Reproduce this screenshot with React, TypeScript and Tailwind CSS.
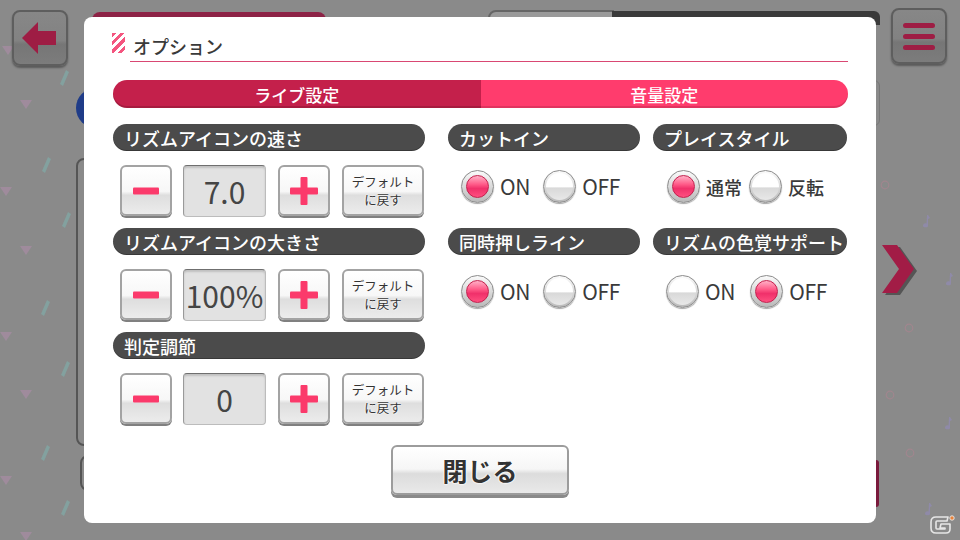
import React from "react";

const deco: { x: number; y: number; t: "tri" | "teal" | "ring" | "note" }[] = [
  { x: 2, y: 46, t: "tri" },
  { x: 20, y: 100, t: "tri" },
  { x: 60, y: 70, t: "teal" },
  { x: 42, y: 157, t: "teal" },
  { x: 0, y: 187, t: "tri" },
  { x: 62, y: 212, t: "teal" },
  { x: 20, y: 246, t: "tri" },
  { x: 41, y: 300, t: "teal" },
  { x: 0, y: 332, t: "tri" },
  { x: 61, y: 361, t: "teal" },
  { x: 20, y: 390, t: "tri" },
  { x: 41, y: 445, t: "teal" },
  { x: 0, y: 476, t: "tri" },
  { x: 61, y: 500, t: "teal" },
  { x: 20, y: 532, t: "tri" },
  { x: 885, y: 390, t: "ring" },
  { x: 905, y: 448, t: "ring" },
  { x: 904, y: 323, t: "ring" },
  { x: 942, y: 417, t: "note" },
  { x: 922, y: 503, t: "note" },
  { x: 920, y: 215, t: "note" },
  { x: 943, y: 273, t: "note" },
  { x: 880, y: 180, t: "ring" },
];

function Deco({ t }: { t: string }) {
  if (t === "tri")
    return (
      <svg width="12" height="9" viewBox="0 0 12 9">
        <path d="M0 0 L12 0 L6 9 Z" fill="#9f8b9c" />
      </svg>
    );
  if (t === "teal")
    return (
      <svg width="9" height="16" viewBox="0 0 9 16">
        <path d="M6 0 L9 2 L3 16 L0 14 Z" fill="#83a19f" />
      </svg>
    );
  if (t === "ring")
    return (
      <svg width="10" height="10" viewBox="0 0 10 10">
        <circle cx="5" cy="5" r="3.8" fill="none" stroke="#a0868e" strokeWidth="1.2" />
      </svg>
    );
  return (
    <svg width="10" height="14" viewBox="0 0 10 14">
      <path d="M7 0 L8 0 L8 10 A2.5 2 0 1 1 6.5 8.5 L7 0 Z M8 0 L10 3 L8 4 Z" fill="#8f8aa8" />
    </svg>
  );
}

function Radio({ on }: { on: boolean }) {
  return (
    <div className="w-[33px] h-[33px] shrink-0 rounded-full border border-[#8c8c8c] bg-[linear-gradient(#fbfbfb,#b9b9b9)] flex items-center justify-center shadow-[0_1px_1px_rgba(0,0,0,0.35)]">
      {on ? (
        <div className="w-[23px] h-[23px] rounded-full border border-[#c3204d] bg-[linear-gradient(#ffb0c6_0%,#ff5a88_40%,#f0306a_60%,#ff4f80_100%)]" />
      ) : (
        <div className="w-[27px] h-[27px] rounded-full bg-[linear-gradient(#ffffff_0%,#ffffff_50%,#d9d9d9_56%,#e8e8e8_100%)]" />
      )}
    </div>
  );
}

function Label({ text }: { text: string }) {
  const latin = /^[A-Z]+$/.test(text);
  return (
    <span
      className={
        latin
          ? "ml-[6px] text-[21px] tracking-[-0.3px] font-normal"
          : "ml-[6px] text-[18px] font-medium"
      }
    >
      {text}
    </span>
  );
}

function RadioRow({
  a,
  b,
  sel,
  offsets,
}: {
  a: string;
  b: string;
  sel: 0 | 1;
  offsets: [number, number];
}) {
  return (
    <div className="flex items-center h-[33px] text-[#3a3a3a] leading-none">
      <div style={{ width: offsets[0] }} className="shrink-0" />
      <Radio on={sel === 0} />
      <Label text={a} />
      <div style={{ width: offsets[1] }} className="shrink-0" />
      <Radio on={sel === 1} />
      <Label text={b} />
    </div>
  );
}

const btn =
  "rounded-[6px] border-2 border-[#a3a3a3] bg-[linear-gradient(#ffffff_0%,#f7f7f7_52%,#dedede_60%,#ececec_100%)] shadow-[0_2px_0_#808080] flex items-center justify-center";

function Stepper({ value }: { value: string }) {
  return (
    <div className="flex h-[52px] mt-[14px]">
      <div className={`${btn} ml-[7px] w-[52px] h-[51px]`}>
        <svg width="26" height="8" viewBox="0 0 26 8">
          <rect x="0" y="0.5" width="26" height="7" rx="1" fill="#fb3a6b" />
        </svg>
      </div>
      <div className="ml-[11px] w-[83px] h-[52px] rounded-[4px] bg-[#e2e2e2] border border-[#bcbcbc] border-t-[#6f6f6f] border-l-[#9a9a9a] shadow-[inset_0_2px_2px_rgba(0,0,0,0.15)] flex items-center justify-center text-[30px] font-normal text-[#454545] leading-none">
        {value}
      </div>
      <div className={`${btn} ml-[12px] w-[52px] h-[51px]`}>
        <svg width="28" height="28" viewBox="0 0 28 28">
          <rect x="10.5" y="0" width="7" height="28" rx="1" fill="#fb3a6b" />
          <rect x="0" y="10.5" width="28" height="7" rx="1" fill="#fb3a6b" />
        </svg>
      </div>
      <div
        className={`${btn} ml-[12px] w-[82px] h-[51px] flex-col text-[12.5px] leading-[18px] text-[#333] [text-shadow:0_0_2px_#fff,0_0_2px_#fff]`}
      >
        <span className="block h-[15px] leading-[15px]">デフォルト</span>
        <span className="block h-[15px] leading-[15px] mt-[3px]">に戻す</span>
      </div>
    </div>
  );
}

function Pill({ children, w }: { children: React.ReactNode; w: string }) {
  return (
    <div
      className={`${w} h-[27px] rounded-full bg-[#4b4b4b] text-white text-[18px] font-medium leading-none flex items-center pl-[11px] shadow-[inset_0_-1px_0_rgba(0,0,0,0.25)]`}
    >
      {children}
    </div>
  );
}

export default function App() {
  return (
    <div className="relative w-[960px] h-[540px] overflow-hidden bg-[#8a8a8a] font-['Noto_Sans_CJK_JP','Noto_Sans',sans-serif]">
      {deco.map((d, i) => (
        <div key={i} className="absolute" style={{ left: d.x, top: d.y }}>
          <Deco t={d.t} />
        </div>
      ))}

      {/* back button */}
      <div className="absolute left-[12px] top-[10px] w-[56px] h-[56px] rounded-[8px] border-2 border-[#5e5e5e] bg-[linear-gradient(#878787_0%,#828282_55%,#767676_62%,#7c7c7c_100%)] shadow-[0_2px_2px_rgba(0,0,0,0.35)] flex items-center justify-center">
        <svg width="36" height="32" viewBox="0 0 36 32">
          <path d="M0 16 L16 0 L16 9 L34 9 L34 23 L16 23 L16 32 Z" fill="#9e1d44" />
        </svg>
      </div>

      {/* menu button */}
      <div className="absolute left-[891px] top-[8px] w-[56px] h-[56px] rounded-[8px] border-2 border-[#5e5e5e] bg-[linear-gradient(#878787_0%,#828282_55%,#767676_62%,#7c7c7c_100%)] shadow-[0_2px_2px_rgba(0,0,0,0.35)] flex flex-col items-center justify-center gap-[6px]">
        <div className="w-[32px] h-[5px] rounded-full bg-[#9e1d44]" />
        <div className="w-[32px] h-[5px] rounded-full bg-[#9e1d44]" />
        <div className="w-[32px] h-[5px] rounded-full bg-[#9e1d44]" />
      </div>

      {/* background panels behind modal */}
      <div className="absolute left-[92px] top-[12px] w-[234px] h-[14px] rounded-t-[8px] bg-[#8d2346]" />
      <div className="absolute left-[488px] top-[10px] w-[126px] h-[14px] rounded-tl-[8px] border-2 border-[#666] bg-[#9a9a9a]" />
      <div className="absolute left-[612px] top-[11px] w-[268px] h-[14px] rounded-tr-[6px] bg-[#3a3a3a]" />
      <div className="absolute left-[860px] top-[80px] w-[20px] h-[46px] rounded-r-[6px] border border-[#777]" />
      <div className="absolute left-[76px] top-[88px] w-[40px] h-[40px] rounded-full bg-[#1f3c88]" />
      <div className="absolute left-[76px] top-[158px] w-[30px] h-[288px] rounded-l-[8px] border-2 border-[#555]" />
      <div className="absolute left-[80px] top-[455px] w-[30px] h-[36px] rounded-l-[8px] border-2 border-[#555]" />
      <div className="absolute left-[860px] top-[460px] w-[19px] h-[47px] rounded-r-[3px] bg-[#7a1a3c]" />

      {/* chevron */}
      <svg className="absolute left-[880px] top-[243px]" width="40" height="56" viewBox="0 0 40 56">
        <path d="M5 4 L20 4 L37 28 L20 52 L5 52 L22 28 Z" fill="#555" />
        <path d="M2 2 L17 2 L34 26 L17 50 L2 50 L19 26 Z" fill="#a21c46" />
      </svg>

      {/* logo */}
      <svg className="absolute left-[928px] top-[514px]" width="28" height="22" viewBox="0 0 28 22">
        <path
          d="M20 3 L8 3 Q3 3 3 8 L3 14 Q3 19 8 19 L18 19 Q22 19 22 15 L22 10 L13 10 L12 14 L17 14 L17 15 L9 15 Q8 15 8 14 L8 8 Q8 7 9 7 L19 7 Z"
          fill="#8a8a8a"
          stroke="#e6e6e6"
          strokeWidth="1.6"
          strokeLinejoin="round"
        />
        <circle cx="24" cy="4" r="2.2" fill="#e8823a" stroke="#e6e6e6" strokeWidth="1" />
      </svg>

      {/* modal */}
      <div className="absolute left-[84px] top-[17px] w-[792px] h-[506px] rounded-[8px] bg-white pl-[28px] pr-[28px] pt-[16px] flex flex-col">
        {/* title */}
        <div className="flex items-start">
          <div className="w-[13px] h-[20px] bg-[repeating-linear-gradient(135deg,#f4557f_0px,#f4557f_3px,#ffffff_3px,#ffffff_6px)]" />
          <div className="ml-[5px] flex-1 h-[29px] border-b border-[#d94873] flex items-center pl-[3px] text-[18px] font-medium text-[#3a3a3a] leading-none pb-[2px]">
            オプション
          </div>
        </div>

        {/* tabs */}
        <div className="mt-[18px] ml-[1px] flex h-[28px] text-white text-[17px] font-medium leading-none">
          <div className="flex-1 rounded-l-full bg-[#c4204b] flex items-center justify-center shadow-[inset_0_-2px_0_rgba(0,0,0,0.15)]">
            ライブ設定
          </div>
          <div className="flex-1 rounded-r-full bg-[#ff3c6d] flex items-center justify-center shadow-[inset_0_-2px_0_rgba(0,0,0,0.12)]">
            音量設定
          </div>
        </div>

        {/* content */}
        <div className="mt-[16px] ml-[1px] flex">
          <div className="w-[312px] flex flex-col">
            <Pill w="w-[312px]">リズムアイコンの速さ</Pill>
            <Stepper value="7.0" />
            <div className="mt-[11px]">
              <Pill w="w-[312px]">リズムアイコンの大きさ</Pill>
            </div>
            <Stepper value="100%" />
            <div className="mt-[11px]">
              <Pill w="w-[312px]">判定調節</Pill>
            </div>
            <Stepper value="0" />
          </div>

          <div className="ml-[23px] w-[192px] flex flex-col">
            <Pill w="w-[192px]">カットイン</Pill>
            <div className="mt-[19px]">
              <RadioRow a="ON" b="OFF" sel={0} offsets={[13, 13]} />
            </div>
            <div className="mt-[25px]">
              <Pill w="w-[192px]">同時押しライン</Pill>
            </div>
            <div className="mt-[20px]">
              <RadioRow a="ON" b="OFF" sel={0} offsets={[13, 13]} />
            </div>
          </div>

          <div className="ml-[13px] w-[194px] flex flex-col">
            <Pill w="w-[194px]">プレイスタイル</Pill>
            <div className="mt-[19px]">
              <RadioRow a="通常" b="反転" sel={0} offsets={[14, 7]} />
            </div>
            <div className="mt-[25px]">
              <Pill w="w-[194px]">リズムの色覚サポート</Pill>
            </div>
            <div className="mt-[20px]">
              <RadioRow a="ON" b="OFF" sel={1} offsets={[13, 15]} />
            </div>
          </div>
        </div>

        {/* close */}
        <div className="mt-[20px] flex justify-center">
          <div className="w-[178px] h-[50px] rounded-[6px] border-2 border-[#9c9c9c] bg-[linear-gradient(#ffffff_0%,#f6f6f6_48%,#dcdcdc_58%,#e9e9e9_100%)] shadow-[0_3px_0_#8a8a8a] flex items-center justify-center text-[25px] font-bold text-[#333] leading-none [text-shadow:0_0_2px_#fff,0_0_2px_#fff,0_0_2px_#fff]">
            閉じる
          </div>
        </div>
      </div>
    </div>
  );
}
